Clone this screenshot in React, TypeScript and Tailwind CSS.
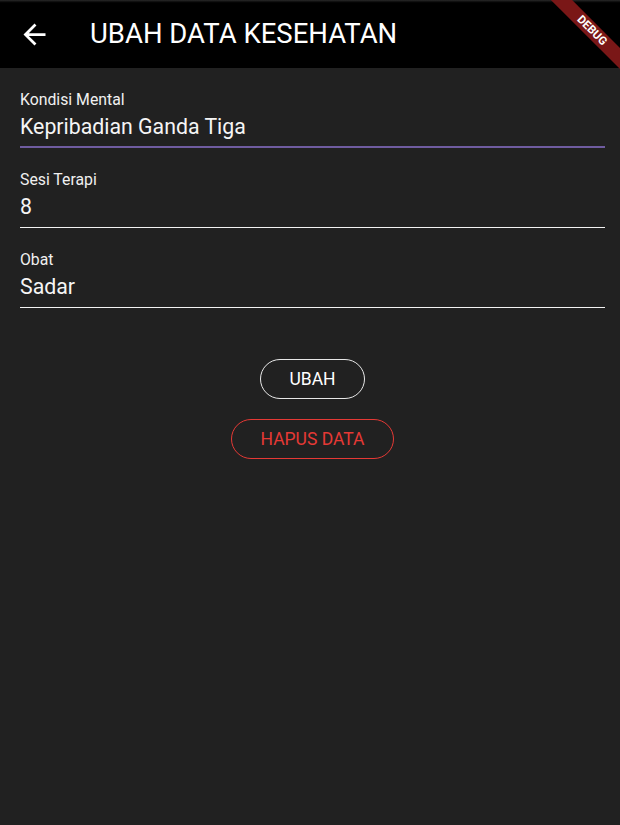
import React from 'react';

const fields = [
  { label: 'Kondisi Mental', value: 'Kepribadian Ganda Tiga', focused: true },
  { label: 'Sesi Terapi', value: '8', focused: false },
  { label: 'Obat', value: 'Sadar', focused: false },
];

const Field = ({ label, value, focused }: { label: string; value: string; focused: boolean }) => (
  <div className={focused ? 'border-b-2 border-[#6f5ca0] pb-[5px]' : 'border-b border-[#f2f2f2] pb-[6px]'}>
    <div className="pt-[2px] text-[15.8px] leading-5 text-[#f0f0f0]">{label}</div>
    <div className="mt-[3px] text-[21.3px] leading-7 text-[#f5f5f5]">{value}</div>
  </div>
);

export default function App() {
  return (
    <div className="relative h-[825px] w-full overflow-hidden bg-[#212121] font-['Roboto',sans-serif]">
      <header className="relative flex h-[68px] items-center bg-black">
        <div className="absolute inset-x-0 top-0 h-1 bg-gradient-to-b from-[#2a2a2a] to-black" />
        <svg className="relative ml-[18px] h-[33px] w-[33px]" viewBox="0 0 24 24" fill="white">
          <path d="M20 11H7.83l5.59-5.59L12 4l-8 8 8 8 1.41-1.41L7.83 13H20v-2z" />
        </svg>
        <h1 className="relative ml-[39px] text-[27.5px] leading-8 text-white">UBAH DATA KESEHATAN</h1>
      </header>

      <main className="pl-5 pr-[15px] pt-5">
        <div className="flex flex-col gap-5">
          {fields.map((f) => (
            <Field key={f.label} {...f} />
          ))}
        </div>

        <div className="mt-[51px] flex flex-col items-center gap-5">
          <button className="h-10 w-[105px] rounded-full border border-[#e8e8e8] text-[17.5px] text-white">
            UBAH
          </button>
          <button className="h-10 w-[163px] rounded-full border border-[#e53935] text-[17.5px] text-[#e53935]">
            HAPUS DATA
          </button>
        </div>
      </main>

      <div className="absolute left-[530px] top-[23px] flex h-[15px] w-[124px] rotate-45 items-center justify-center bg-[#7a1717]">
        <span className="text-[11.5px] font-bold leading-none text-white">DEBUG</span>
      </div>
    </div>
  );
}
